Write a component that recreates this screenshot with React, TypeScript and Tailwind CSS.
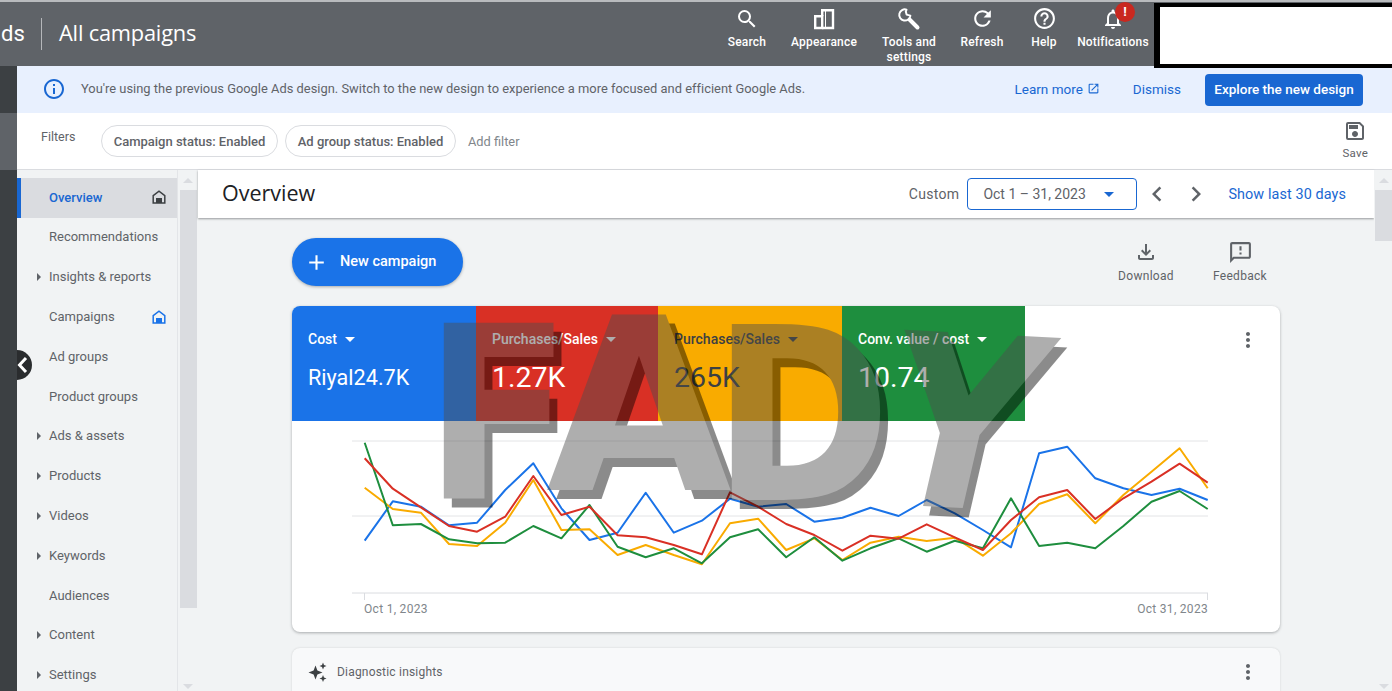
import {
  MdSearch, MdRefresh, MdHelpOutline, MdOutlineNotifications, MdInfoOutline, MdOpenInNew,
  MdOutlineSave, MdArrowDropDown, MdChevronLeft, MdChevronRight, MdAdd, MdOutlineFileDownload,
  MdOutlineFeedback, MdMoreVert,
} from 'react-icons/md';

const xs = Array.from({ length: 31 }, (_, i) => 364.7 - 292 + 28.1 * i);

// y values read off the chart, in zoomed pixels
const series = [
  { color: '#1a73e8', ys: [722, 604, 620, 676, 668, 570, 490, 625, 720, 698, 578, 698, 662, 596, 620, 612, 665, 653, 623, 648, 600, 640, 690, 742, 460, 440, 535, 565, 585, 566, 600] },
  { color: '#f9ab00', ys: [563, 627, 638, 732, 738, 668, 540, 690, 688, 765, 735, 765, 793, 670, 656, 750, 715, 780, 728, 710, 723, 713, 767, 700, 612, 583, 670, 585, 515, 445, 565] },
  { color: '#1e8e3e', ys: [428, 676, 672, 718, 730, 728, 678, 715, 615, 740, 772, 745, 790, 712, 688, 772, 712, 782, 745, 715, 755, 722, 745, 595, 738, 728, 745, 678, 605, 573, 627] },
  { color: '#d93025', ys: [475, 566, 622, 678, 695, 650, 528, 645, 620, 706, 712, 735, 763, 577, 620, 672, 705, 752, 707, 716, 673, 712, 750, 660, 592, 570, 657, 595, 545, 491, 548] },
];

const toPoints = (ys: number[]) => ys.map((y, i) => `${xs[i].toFixed(1)},${(300 + y / 3 - 421).toFixed(1)}`).join(' ');

function AppearanceIcon() {
  return (
    <svg width="22" height="22" viewBox="0 0 22 22" fill="none" stroke="white" strokeWidth="2.4">
      <path d="M2.2 8.2H9.2V20H2.2Z" />
      <path d="M9.2 8.2V2.2H20V20H9.2" />
      <path d="M12.5 3V20" strokeWidth="1" />
    </svg>
  );
}

function WrenchIcon() {
  return (
    <svg width="24" height="24" viewBox="0 0 24 24" fill="none" stroke="white" strokeLinecap="round">
      <path d="M12.5 12.5L20.5 20.5" strokeWidth="4" />
      <path d="M9.5 2.6A5.6 5.6 0 1 0 13.4 8.6L9.6 7.6L8.8 4.6Z" strokeWidth="2" fill="#5f6368" strokeLinejoin="round" />
    </svg>
  );
}

function HomeIcon({ className }: { className: string }) {
  return (
    <svg className={className} width="14" height="14" viewBox="0 0 14 14" fill="none">
      <path d="M1.2 13V5.6L7 1.2L12.8 5.6V13H1.2Z" stroke="currentColor" strokeWidth="1.5" />
      <rect x="4" y="8" width="6" height="5" fill="currentColor" />
    </svg>
  );
}

function SparkleIcon() {
  return (
    <svg width="20" height="20" viewBox="0 0 20 20" fill="#3c4043">
      <path d="M7.5 3.5L9.4 8.6L14.5 10.5L9.4 12.4L7.5 17.5L5.6 12.4L0.5 10.5L5.6 8.6Z" />
      <path d="M15 0.5L16 3L18.5 4L16 5L15 7.5L14 5L11.5 4L14 3Z" />
      <path d="M15 13L16 15.5L18.5 16.5L16 17.5L15 20L14 17.5L11.5 16.5L14 15.5Z" />
    </svg>
  );
}

function TopAction({ icon, label, width }: { icon: React.ReactNode; label: string; width: string }) {
  return (
    <div className={`flex flex-col items-center pt-[5px] ${width}`}>
      <div className="flex h-[23px] items-center justify-center">{icon}</div>
      <span className="mt-[5px] text-center text-[12px] leading-[14.5px] font-medium tracking-[0.2px] text-white">{label}</span>
    </div>
  );
}

const navItems: { label: string; arrow?: boolean; home?: 'dark' | 'blue'; active?: boolean }[] = [
  { label: 'Overview', home: 'dark', active: true },
  { label: 'Recommendations' },
  { label: 'Insights & reports', arrow: true },
  { label: 'Campaigns', home: 'blue' },
  { label: 'Ad groups' },
  { label: 'Product groups' },
  { label: 'Ads & assets', arrow: true },
  { label: 'Products', arrow: true },
  { label: 'Videos', arrow: true },
  { label: 'Keywords', arrow: true },
  { label: 'Audiences' },
  { label: 'Content', arrow: true },
  { label: 'Settings', arrow: true },
];

const tabs = [
  { label: 'Cost', value: 'Riyal24.7K', size: 'text-[21.6px] leading-[34px]', bg: 'bg-[#1a73e8]', text: 'text-white', w: 'w-[184px]' },
  { label: 'Purchases/Sales', value: '1.27K', size: 'text-[28.5px] leading-[34px]', bg: 'bg-[#d93025]', text: 'text-white', w: 'w-[182px]' },
  { label: 'Purchases/Sales', value: '265K', size: 'text-[28.5px] leading-[34px]', bg: 'bg-[#f9ab00]', text: 'text-[#3c4043]', w: 'w-[184px]' },
  { label: 'Conv. value / cost', value: '10.74', size: 'text-[28.5px] leading-[34px]', bg: 'bg-[#1e8e3e]', text: 'text-white', w: 'w-[183px]' },
];

export default function App() {
  return (
    <div className="relative flex h-[691px] w-[1392px] flex-col overflow-hidden bg-white font-['Roboto',sans-serif]">
      {/* Top bar */}
      <div className="flex h-[66px] shrink-0 border-t-[2px] border-[#b9bbbe] bg-[#5f6368]">
        <div className="flex h-[64px] w-[727px] items-center pb-[1px] text-[22px] text-white">
          <span className="ml-[1px] w-[40px]">ds</span>
          <div className="h-[32px] w-px bg-[#b5b7ba]" />
          <span className="ml-[17px] font-['Open_Sans',sans-serif] text-[21.8px] tracking-[-0.2px]">All campaigns</span>
        </div>
        <div className="flex">
          <TopAction width="w-[40px]" label="Search" icon={<MdSearch size={24} color="white" />} />
          <div className="w-[23px]" />
          <TopAction width="w-[68px]" label="Appearance" icon={<AppearanceIcon />} />
          <div className="w-[23px]" />
          <TopAction width="w-[56px]" label="Tools and settings" icon={<WrenchIcon />} />
          <div className="w-[23px]" />
          <TopAction width="w-[44px]" label="Refresh" icon={<MdRefresh size={25} color="white" />} />
          <div className="w-[28px]" />
          <TopAction width="w-[24px]" label="Help" icon={<MdHelpOutline size={25} color="white" />} />
          <div className="w-[21px]" />
          <div className="relative">
            <TopAction width="w-[72px]" label="Notifications" icon={<MdOutlineNotifications size={24} color="white" />} />
            <div className="absolute top-0 left-[38px] flex h-[20px] w-[20px] items-center justify-center rounded-full bg-[#c9281f] text-[13px] font-bold text-white">!</div>
          </div>
        </div>
        <div className="relative z-10 mt-[1px] ml-[5px] h-[65px] flex-1 border-y-[4px] border-l-[6px] border-black bg-white" />
      </div>

      <div className="flex min-h-0 flex-1">
        {/* Left rail */}
        <div className="flex w-[17px] shrink-0 flex-col bg-[#3c4043]">
          <div className="h-[47px]" />
          <div className="h-[57px] bg-[#5f6368]" />
        </div>

        <div className="flex min-w-0 flex-1 flex-col">
          {/* Banner */}
          <div className="flex h-[47px] shrink-0 items-center bg-[#e8f0fe] pr-[29px] pl-[25px]">
            <MdInfoOutline size={24} color="#1967d2" className="-mt-[1px]" />
            <span className="mb-[1px] ml-[15px] flex-1 text-[12.89px] tracking-[0.01px] text-[#5f6368]">
              You're using the previous Google Ads design. Switch to the new design to experience a more focused and efficient Google Ads.
            </span>
            <span className="flex items-center text-[13.5px] text-[#1967d2]">
              Learn more <MdOpenInNew size={13} className="mb-[2px] ml-[4px]" />
            </span>
            <span className="mr-[24px] ml-[33px] text-[13.5px] text-[#1967d2]">Dismiss</span>
            <button className="h-[32px] w-[158px] rounded-[4px] bg-[#1967d2] text-[13.5px] font-medium text-white">Explore the new design</button>
          </div>

          {/* Filters */}
          <div className="flex h-[57px] shrink-0 border-b border-[#dadce0] bg-white pl-[24px]">
            <span className="mt-[15px] w-[60px] text-[12.5px] text-[#5f6368]">Filters</span>
            <div className="mt-[12px] flex h-[32px] w-[177px] items-center justify-center rounded-full border border-[#dadce0] pt-[1px] text-[13px] font-medium text-[#5f6368]">Campaign status: Enabled</div>
            <div className="mt-[12px] ml-[7px] flex h-[32px] w-[171px] items-center justify-center rounded-full border border-[#dadce0] pt-[1px] text-[13px] font-medium text-[#5f6368]">Ad group status: Enabled</div>
            <span className="mt-[19px] ml-[12px] text-[12.8px] text-[#80868b]">Add filter</span>
            <div className="mt-[6px] mr-[24px] ml-auto flex flex-col items-center text-[#5f6368]">
              <MdOutlineSave size={24} />
              <span className="mt-[2px] text-[11.5px] tracking-[0.2px]">Save</span>
            </div>
          </div>

          <div className="flex min-h-0 flex-1">
            {/* Side nav */}
            <div className="w-[160px] shrink-0 bg-[#f1f3f4] pt-[8px]">
              {navItems.map(item => (
                <div key={item.label} className={`flex h-[39.8px] items-center pb-[1px] ${item.active ? 'border-l-[4px] border-[#1967d2] bg-[#dadce0] pl-[16px]' : 'pl-[20px]'}`}>
                  <div className="flex w-[12px] items-center">
                    {item.arrow && <div className="h-0 w-0 border-y-[4px] border-l-[4px] border-y-transparent border-l-[#5f6368]" />}
                  </div>
                  <span className={`text-[13px] ${item.active ? 'font-medium text-[#1967d2]' : 'text-[#5f6368]'}`}>{item.label}</span>
                  {item.home === 'dark' && <HomeIcon className="mr-[11px] ml-auto text-[#3c4043]" />}
                  {item.home === 'blue' && <HomeIcon className="mr-[11px] ml-auto text-[#1a73e8]" />}
                </div>
              ))}
            </div>

            {/* Nav scrollbar */}
            <div className="flex w-[21px] shrink-0 flex-col items-center border-l border-[#e3e5e8] bg-[#f1f3f4] pt-[8px]">
              <div className="h-0 w-0 border-x-[5px] border-b-[5px] border-x-transparent border-b-[#dadce0]" />
              <div className="mt-[7px] h-[418px] w-[17px] bg-[#dadce0]" />
              <div className="mt-[76px] h-0 w-0 border-x-[5px] border-t-[5px] border-x-transparent border-t-[#dadce0]" />
            </div>

            {/* Main */}
            <div className="flex min-w-0 flex-1 flex-col bg-[#f1f3f4]">
              <div className="flex h-[48px] shrink-0 items-center bg-white pr-[28px] pl-[24px] shadow-[0_1px_2px_rgba(60,64,67,0.5)]">
                <span className="mb-[2px] flex-1 font-['Open_Sans',sans-serif] text-[21.5px] text-[#202124]">Overview</span>
                <span className="mr-[8px] text-[14px] tracking-[0.3px] text-[#5f6368]">Custom</span>
                <div className="flex h-[32px] w-[170px] items-center rounded-[4px] border-[1.5px] border-[#1967d2] pl-[15px] text-[14px] text-[#5f6368]">
                  Oct 1 – 31, 2023
                  <MdArrowDropDown size={24} color="#1967d2" className="ml-[11px]" />
                </div>
                <MdChevronLeft size={30} color="#5f6368" className="ml-[5px]" />
                <MdChevronRight size={30} color="#5f6368" className="ml-[9px]" />
                <span className="mt-[1px] ml-[17px] text-[14.4px] tracking-[0.1px] text-[#1967d2]">Show last 30 days</span>
              </div>

              <div className="relative min-h-0 flex-1 overflow-hidden px-[94px] pt-[20px]">
                <div className="flex h-[48px] items-start justify-between">
                  <button className="flex h-[48px] w-[171px] items-center rounded-full bg-[#1a73e8] pl-[12px] text-[14.5px] font-medium text-white shadow-[0_1px_3px_rgba(60,64,67,0.4)]">
                    <MdAdd size={25} />
                    <span className="mb-[1px] ml-[11px]">New campaign</span>
                  </button>
                  <div className="mr-[10px] flex pt-[2px] text-[#5f6368]">
                    <div className="flex w-[60px] flex-col items-center">
                      <MdOutlineFileDownload size={24} />
                      <span className="mt-[3px] text-[12px] tracking-[0.3px]">Download</span>
                    </div>
                    <div className="ml-[34px] flex w-[60px] flex-col items-center">
                      <MdOutlineFeedback size={25} />
                      <span className="mt-[2px] text-[12px] tracking-[0.3px]">Feedback</span>
                    </div>
                  </div>
                </div>

                {/* Performance card */}
                <div className="mt-[20px] h-[326px] overflow-hidden rounded-lg bg-white shadow-[0_1px_3px_rgba(60,64,67,0.4)]">
                  <div className="flex h-[115px]">
                    {tabs.map((tab, i) => (
                      <div key={i} className={`${tab.bg} ${tab.text} ${tab.w} pt-[25px] pl-[16px]`}>
                        <div className="flex h-[16px] items-center text-[14px] font-medium">
                          {tab.label}
                          <MdArrowDropDown size={24} className="ml-[1px]" />
                        </div>
                        <div className={`mt-[14px] ${tab.size}`}>{tab.value}</div>
                      </div>
                    ))}
                    <div className="flex flex-1 justify-end pt-[22px] pr-[20px]">
                      <MdMoreVert size={24} color="#5f6368" />
                    </div>
                  </div>
                  <svg className="block" width="988" height="179" viewBox="0 0 988 179">
                    <line x1="60" x2="916" y1="20" y2="20" stroke="#e3e4e6" />
                    <line x1="60" x2="916" y1="95" y2="95" stroke="#e3e4e6" />
                    <line x1="60" x2="916" y1="172" y2="172" stroke="#dadce0" />
                    <line x1="72.5" x2="72.5" y1="172" y2="179" stroke="#dadce0" />
                    <line x1="915.5" x2="915.5" y1="172" y2="179" stroke="#dadce0" />
                    {series.map(s => (
                      <polyline key={s.color} points={toPoints(s.ys)} fill="none" stroke={s.color} strokeWidth="2" strokeLinejoin="round" />
                    ))}
                  </svg>
                  <div className="flex justify-between pr-[72px] pl-[72px] text-[12px] tracking-[0.3px] text-[#80868b]">
                    <span>Oct 1, 2023</span>
                    <span>Oct 31, 2023</span>
                  </div>
                </div>

                {/* Diagnostic insights */}
                <div className="mt-[16px] flex h-[60px] items-start rounded-lg bg-[#f8f9fa] pt-[14px] pr-[20px] pl-[16px] shadow-[0_0_2px_rgba(60,64,67,0.2)]">
                  <SparkleIcon />
                  <span className="mt-[1px] ml-[9px] flex-1 text-[12px] tracking-[0.2px] text-[#5f6368]">Diagnostic insights</span>
                  <MdMoreVert size={24} color="#5f6368" className="-mt-[2px]" />
                </div>
              </div>
            </div>

            {/* Page scrollbar */}
            <div className="flex w-[18px] shrink-0 flex-col items-center bg-[#f1f3f4] pt-[8px] pl-[1px]">
              <div className="h-0 w-0 border-x-[5px] border-b-[5px] border-x-transparent border-b-[#dadce0]" />
              <div className="mt-[7px] h-[51px] w-full bg-[#dadce0]" />
              <div className="mt-[443px] h-0 w-0 border-x-[5px] border-t-[5px] border-x-transparent border-t-[#dadce0]" />
            </div>
          </div>
        </div>
      </div>

      {/* Nav collapse handle */}
      <div className="absolute top-[350px] left-[17px] flex h-[30px] w-[15px] items-center rounded-r-full bg-[#2a2c2e]">
        <svg width="12" height="20" viewBox="0 0 12 20" fill="none">
          <path d="M9 3L2.5 10L9 17" stroke="white" strokeWidth="3" />
        </svg>
      </div>

      {/* FADY watermark */}
      <div className="pointer-events-none absolute inset-0 font-['DejaVu_Sans',sans-serif] text-[240px] leading-none font-bold text-[#4e4e4e] opacity-45">
        <span className="absolute top-[296px] left-[424px] origin-left scale-x-90 [text-shadow:9px_9px_0_#000]">F</span>
        <span className="absolute top-[287px] left-[546px] [text-shadow:9px_9px_0_#000]">A</span>
        <span className="absolute top-[297px] left-[712px] origin-left scale-x-90 [text-shadow:9px_9px_0_#000]">D</span>
        <span className="absolute top-[305px] left-[875px] [transform:rotate(3deg)_skewX(-10deg)_scaleX(.88)] [text-shadow:9px_9px_0_#000]">Y</span>
      </div>
    </div>
  );
}
